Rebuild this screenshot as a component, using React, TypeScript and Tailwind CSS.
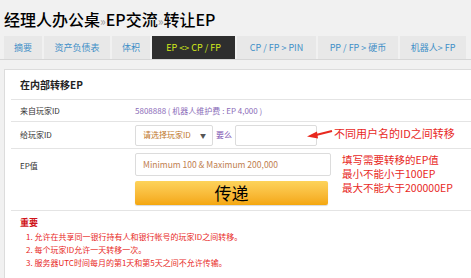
import React from 'react';

const font = { fontFamily: '"Noto Sans CJK SC", "Noto Sans", sans-serif' };

const tabs = [
  { label: '摘要', w: 'w-[38px]' },
  { label: '资产负债表', w: 'w-[66px]' },
  { label: '体积', w: 'w-[38px]' },
  { label: 'EP <> CP / FP', w: 'w-[83px]', active: true },
  { label: 'CP / FP > PIN', w: 'w-[79px]' },
  { label: 'PP / FP > 硬币', w: 'w-[80px]' },
  { label: '机器人> FP', w: 'w-[66px]' },
];

const Arrow = () => (
  <svg width="26" height="10" viewBox="0 0 26 10" className="shrink-0">
    <path d="M25 2 L9 6" stroke="#e8281e" strokeWidth="2" fill="none" />
    <path d="M0 7.5 L10 2.5 L11 9.5 Z" fill="#e8281e" />
  </svg>
);

const App = () => {
  return (
    <div className="w-[471px] h-[278px] overflow-hidden bg-[#f1f1f1]" style={font}>
      <div className="h-[36px] pl-[4px] pt-[9px] text-[16px] leading-[20px] font-medium text-black whitespace-nowrap">
        经理人办公桌<span className="text-[#9a9a9a] text-[12px] font-normal">»</span>EP交流<span className="text-[#9a9a9a] text-[12px] font-normal">»</span>转让EP
      </div>

      <div className="flex pl-[4px] gap-[2px] h-[24px] border-b border-[#d6d6d6]">
        {tabs.map((t) => (
          <div
            key={t.label}
            className={`${t.w} shrink-0 flex items-center justify-center text-[9px] whitespace-nowrap ${
              t.active ? 'bg-[#2e2e2e] text-[#d4ea1a]' : 'bg-[#e8e8e8] text-[#3f8fc7]'
            }`}
          >
            {t.label}
          </div>
        ))}
      </div>

      <div className="ml-[4px] mt-[9px] h-[210px] bg-white border-l border-t border-[#dcdcdc] pl-[6px]">
        <div className="h-[30px] flex items-center pl-[9px] text-[10px] font-bold text-[#222] border-b border-[#e4e4e4]">
          在内部转移EP
        </div>

        <div className="h-[22px] flex items-center border-b border-[#e4e4e4] text-[8px]">
          <div className="w-[124px] pl-[9px] text-[#333]">来自玩家ID</div>
          <div className="text-[#8a6bb8] whitespace-nowrap">5808888 ( 机器人维护费 : EP 4,000 )</div>
        </div>

        <div className="h-[27px] flex items-center border-b border-[#e4e4e4] text-[8px]">
          <div className="w-[124px] pl-[9px] text-[#333]">给玩家ID</div>
          <div className="w-[78px] h-[21px] border border-[#dcdcdc] rounded-[2px] flex items-center justify-between pl-[7px] pr-[6px] text-[#c0772c] whitespace-nowrap">
            <span>请选择玩家ID</span>
            <span className="text-[6px] text-[#555]">▼</span>
          </div>
          <div className="ml-[3px] text-[#7b4fb0] whitespace-nowrap">要么</div>
          <div className="ml-[3px] w-[82px] h-[21px] border border-[#dcdcdc] rounded-[2px]" />
          <div className="-ml-[10px] -mt-[3px]">
            <Arrow />
          </div>
          <div className="ml-[1px] text-[11px] text-[#e8281e] whitespace-nowrap -mt-[4px]">不同用户名的ID之间转移</div>
        </div>

        <div className="h-[62px] flex border-b border-[#e4e4e4] text-[8px]">
          <div className="w-[124px] pl-[9px] pt-[11px] text-[#333]">EP值</div>
          <div className="flex flex-col pt-[4px]">
            <div className="w-[196px] h-[23px] border border-[#dcdcdc] rounded-[2px] flex items-center px-[7px] text-[#c08050] text-[8.5px] whitespace-nowrap">
              Minimum 100 &amp; Maximum 200,000
            </div>
            <div className="mt-[5px] w-[193px] h-[24px] rounded-[2px] bg-gradient-to-b from-[#fdd35a] to-[#f4a70a] flex items-center justify-center text-[17px] text-black shadow-[0_1px_1px_rgba(0,0,0,0.15)]">
              传递
            </div>
          </div>
          <div className="ml-[11px] pt-[4px] text-[10.5px] leading-[14px] text-[#e8281e] whitespace-nowrap">
            <div>填写需要转移的EP值</div>
            <div>最小不能小于100EP</div>
            <div>最大不能大于200000EP</div>
          </div>
        </div>

        <div className="pl-[9px] pt-[5px] text-[8px] leading-[13px] text-[#e8281e]">
          <div className="font-bold text-[#d0141a] text-[9px]">重要</div>
          <div className="pl-[6px] pt-[1px]">
            <div>1. 允许在共享同一银行持有人和银行帐号的玩家ID之间转移。</div>
            <div>2. 每个玩家ID允许一天转移一次。</div>
            <div>3. 服务器UTC时间每月的第1天和第5天之间不允许传输。</div>
          </div>
        </div>
      </div>
    </div>
  );
};

export default App;
